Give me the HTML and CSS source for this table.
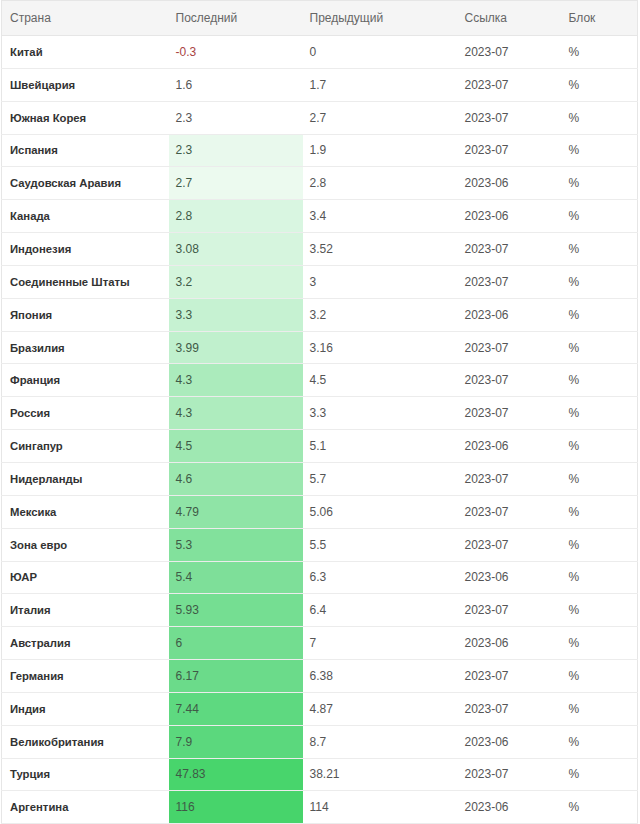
FILE: index.html
```html
<!DOCTYPE html>
<html lang="ru">
<head>
<meta charset="utf-8">
<link rel="stylesheet" href="styles.css">
</head>
<body>
<div class="wrap">
<table class="grid">
<colgroup>
<col class="c1"><col class="c2"><col class="c3"><col class="c4"><col class="c5">
</colgroup>
<thead>
<tr><th>Страна</th><th>Последний</th><th>Предыдущий</th><th>Ссылка</th><th>Блок</th></tr>
</thead>
<tbody>
<tr><td class="name">Китай</td><td class="neg">-0.3</td><td>0</td><td>2023-07</td><td>%</td></tr>
<tr><td class="name">Швейцария</td><td>1.6</td><td>1.7</td><td>2023-07</td><td>%</td></tr>
<tr><td class="name">Южная Корея</td><td>2.3</td><td>2.7</td><td>2023-07</td><td>%</td></tr>
<tr><td class="name">Испания</td><td class="hl" style="background:#e9f9ed">2.3</td><td>1.9</td><td>2023-07</td><td>%</td></tr>
<tr><td class="name">Саудовская Аравия</td><td class="hl" style="background:#ecfaef">2.7</td><td>2.8</td><td>2023-06</td><td>%</td></tr>
<tr><td class="name">Канада</td><td class="hl" style="background:#d9f6e1">2.8</td><td>3.4</td><td>2023-06</td><td>%</td></tr>
<tr><td class="name">Индонезия</td><td class="hl" style="background:#d6f5de">3.08</td><td>3.52</td><td>2023-07</td><td>%</td></tr>
<tr><td class="name">Соединенные Штаты</td><td class="hl" style="background:#d4f5dc">3.2</td><td>3</td><td>2023-07</td><td>%</td></tr>
<tr><td class="name">Япония</td><td class="hl" style="background:#c6f2d2">3.3</td><td>3.2</td><td>2023-06</td><td>%</td></tr>
<tr><td class="name">Бразилия</td><td class="hl" style="background:#c0f0cd">3.99</td><td>3.16</td><td>2023-07</td><td>%</td></tr>
<tr><td class="name">Франция</td><td class="hl" style="background:#abebbc">4.3</td><td>4.5</td><td>2023-07</td><td>%</td></tr>
<tr><td class="name">Россия</td><td class="hl" style="background:#aeecbe">4.3</td><td>3.3</td><td>2023-07</td><td>%</td></tr>
<tr><td class="name">Сингапур</td><td class="hl" style="background:#9fe8b2">4.5</td><td>5.1</td><td>2023-06</td><td>%</td></tr>
<tr><td class="name">Нидерланды</td><td class="hl" style="background:#9be7af">4.6</td><td>5.7</td><td>2023-07</td><td>%</td></tr>
<tr><td class="name">Мексика</td><td class="hl" style="background:#8fe4a6">4.79</td><td>5.06</td><td>2023-07</td><td>%</td></tr>
<tr><td class="name">Зона евро</td><td class="hl" style="background:#82e19c">5.3</td><td>5.5</td><td>2023-07</td><td>%</td></tr>
<tr><td class="name">ЮАР</td><td class="hl" style="background:#7edf99">5.4</td><td>6.3</td><td>2023-06</td><td>%</td></tr>
<tr><td class="name">Италия</td><td class="hl" style="background:#75de92">5.93</td><td>6.4</td><td>2023-07</td><td>%</td></tr>
<tr><td class="name">Австралия</td><td class="hl" style="background:#73dd90">6</td><td>7</td><td>2023-06</td><td>%</td></tr>
<tr><td class="name">Германия</td><td class="hl" style="background:#6bdb8a">6.17</td><td>6.38</td><td>2023-07</td><td>%</td></tr>
<tr><td class="name">Индия</td><td class="hl" style="background:#5ed980">7.44</td><td>4.87</td><td>2023-07</td><td>%</td></tr>
<tr><td class="name">Великобритания</td><td class="hl" style="background:#5bd87d">7.9</td><td>8.7</td><td>2023-06</td><td>%</td></tr>
<tr><td class="name">Турция</td><td class="hl" style="background:#48d56c">47.83</td><td>38.21</td><td>2023-07</td><td>%</td></tr>
<tr><td class="name">Аргентина</td><td class="hl" style="background:#47d46b">116</td><td>114</td><td>2023-06</td><td>%</td></tr>
</tbody>
</table>
</div>
</body>
</html>
```

FILE: styles.css
```css
html, body {
  margin: 0;
  padding: 0;
  background: #ffffff;
}

.wrap {
  padding: 0 2px 0 1px;
}

.grid {
  width: 100%;
  border-collapse: collapse;
  table-layout: fixed;
  font-family: "Liberation Sans", Arial, sans-serif;
  font-size: 12px;
  color: #555555;
  border: 1px solid #e6e6e6;
}

.c1 { width: 167px; }
.c2 { width: 134px; }
.c3 { width: 155px; }
.c4 { width: 104px; }
.c5 { width: 76px; }

.grid th {
  background: #f5f5f5;
  font-weight: normal;
  color: #666666;
  text-align: left;
  height: 35px;
  padding: 0 7px 1px;
  border-bottom: 1px solid #e6e6e6;
  box-sizing: border-box;
}

.grid td {
  height: 32.85px;
  padding: 0 7px;
  border-bottom: 1px solid #ececec;
  box-sizing: border-box;
  vertical-align: middle;
}

.grid td.name {
  font-weight: bold;
  font-size: 11.3px;
  color: #333333;
  padding-left: 8px;
}

.grid th:first-child {
  padding-left: 8px;
}

.grid td.neg {
  color: #a94442;
}

.grid td.hl {
  color: #3f5a47;
}
```
